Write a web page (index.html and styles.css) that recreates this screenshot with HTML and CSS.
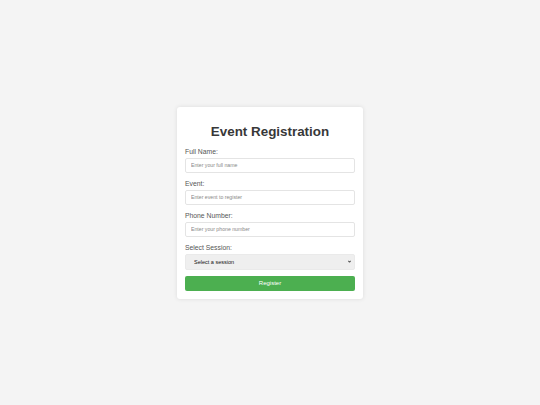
FILE: index.html
```html
<!DOCTYPE html>
<html>
  <head>
    <meta name="viewport" content="width=device-width">
    <title>Event Registration</title>
    <link rel="stylesheet" href="styles.css">
  </head>
  <body>
    <div class="card">
      <h1>Event Registration</h1>
      <form>
        <label for="name">Full Name:</label>
        <input type="text" id="name" placeholder="Enter your full name">

        <label for="event">Event:</label>
        <input type="text" id="event" placeholder="Enter event to register">

        <label for="phone">Phone Number:</label>
        <input type="tel" id="phone" placeholder="Enter your phone number">

        <label for="session">Select Session:</label>
        <div class="select-wrap">
          <select id="session">
            <option>Select a session</option>
            <option>Morning</option>
            <option>Afternoon</option>
            <option>Evening</option>
          </select>
          <svg class="chev" width="3" height="3" viewBox="0 0 8 8">
            <path d="M1 2 L4 6 L7 2" fill="none" stroke="#111" stroke-width="2.4"/>
          </svg>
        </div>

        <button type="submit">Register</button>
      </form>
    </div>
  </body>
</html>
```

FILE: styles.css
```css
body {
    margin: 0;
    height: 100vh;
    background-color: #f4f4f4;
    font-family: "Liberation Sans", Arial, sans-serif;
    display: flex;
    align-items: center;
    justify-content: center;
}
.card {
    width: 170px;
    padding: 8px;
    background: #fff;
    border-radius: 3px;
    box-shadow: 0 0 4px rgba(0, 0, 0, 0.1);
}
h1 {
    margin: 9px 0;
    font-size: 13.4px;
    line-height: 15.3px;
    text-align: center;
    color: #383838;
}
label {
    display: block;
    font-size: 6.8px;
    line-height: 7.7px;
    margin-bottom: 2px;
    color: #555;
}
input {
    display: block;
    box-sizing: border-box;
    width: 100%;
    height: 15.5px;
    margin: 0 0 6.8px 0;
    padding: 0 5px;
    border: 1px solid #e4e4e4;
    border-radius: 2px;
    font-family: inherit;
    font-size: 5.2px;
    color: #333;
    outline: none;
}
input::placeholder { color: #888; }
.select-wrap {
    position: relative;
    margin-bottom: 6px;
}
select {
    display: block;
    box-sizing: border-box;
    width: 100%;
    height: 16px;
    padding: 0 8px;
    border: 1px solid #eaeaea;
    border-radius: 2px;
    background: #efefef;
    appearance: none;
    -webkit-appearance: none;
    font-family: inherit;
    font-size: 5.5px;
    color: #111;
    outline: none;
}
.chev {
    position: absolute;
    right: 4px;
    top: 6.5px;
}
button {
    display: block;
    box-sizing: border-box;
    width: 100%;
    height: 15px;
    padding: 0;
    border: none;
    border-radius: 2px;
    background: #4caf50;
    color: #fff;
    font-family: inherit;
    font-size: 6px;
}
```
